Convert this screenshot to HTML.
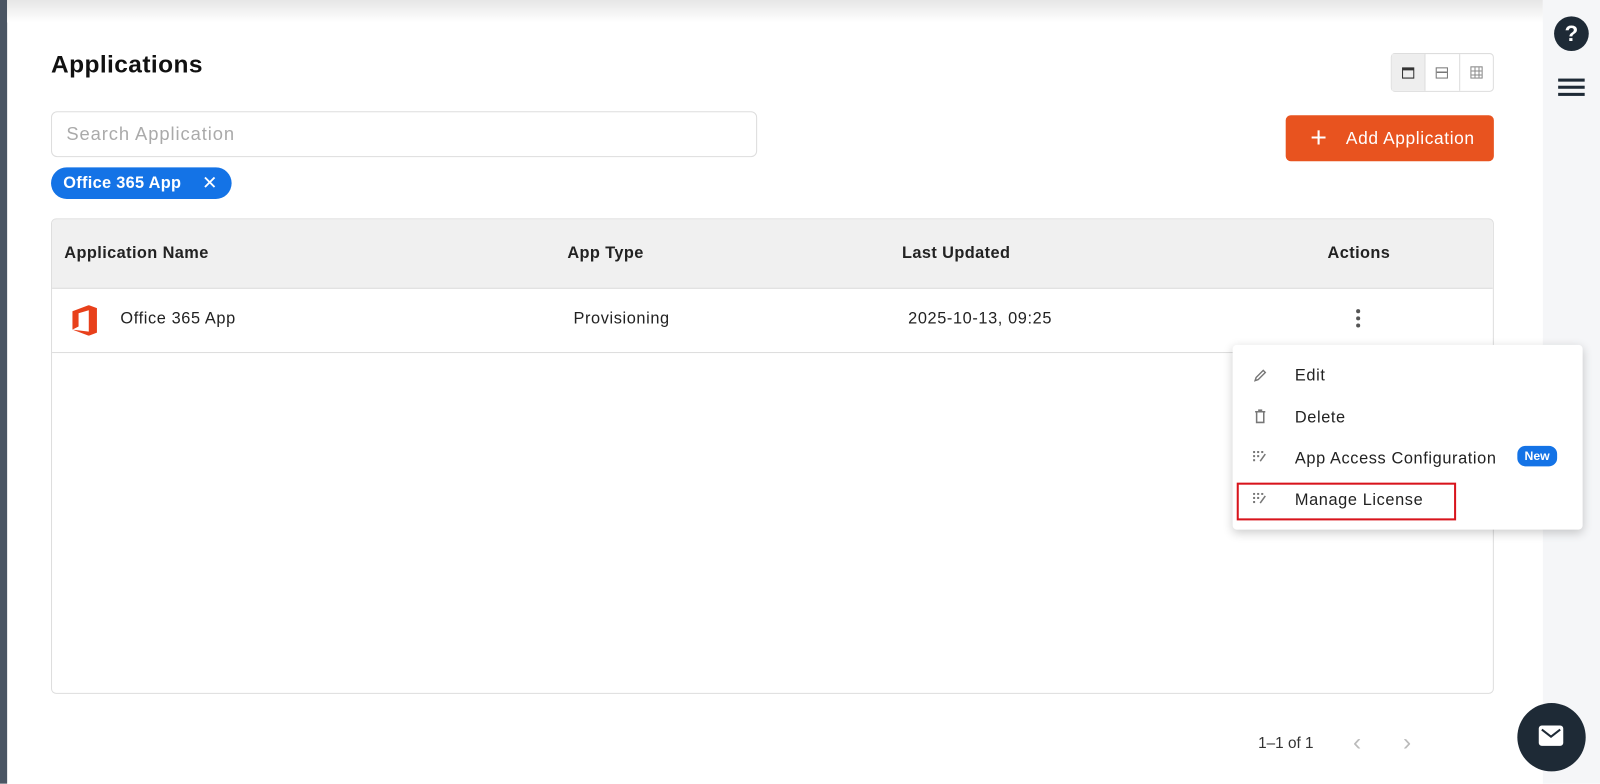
<!DOCTYPE html>
<html><head><meta charset="utf-8"><style>
*{box-sizing:border-box;margin:0;padding:0}
body{width:1600px;height:784px;overflow:hidden;background:#fff;font-family:"Liberation Sans",sans-serif;color:#222;position:relative}
#w{position:absolute;left:0;top:0;width:1568px;height:768px;transform:scale(1.0204);transform-origin:0 0}
.abs{position:absolute}
.t{letter-spacing:.6px}
</style></head><body><div id="w">
<div class="abs" style="left:0;top:0;width:7px;height:768px;background:#4a5563"></div>
<div class="abs" style="left:7px;top:0;width:1505px;height:22px;background:linear-gradient(#e6e6e6,#fff)"></div>
<div class="abs" style="left:1512px;top:0;width:56px;height:768px;background:#f5f6f8"></div>
<div class="abs" style="left:1523px;top:16px;width:34px;height:34px;border-radius:50%;background:#1e2a36;color:#fff;font-weight:bold;font-size:22px;text-align:center;line-height:34px">?</div>
<div class="abs" style="left:1527px;top:77px;width:26px;height:3px;background:#1e2a36;box-shadow:0 7px 0 #1e2a36,0 14px 0 #1e2a36"></div>
<div class="abs" style="left:50px;top:50px;font-size:24px;font-weight:bold;color:#111;letter-spacing:.4px">Applications</div>
<div class="abs" style="left:1363px;top:52px;width:101px;height:38px;border:1px solid #ddd;border-radius:4px;display:flex">
 <div style="width:34px;background:#eee;border-right:1px solid #ddd;display:flex;align-items:center;justify-content:center"><div style="width:12px;height:11px;border:1.5px solid #333;border-top-width:3px"></div></div>
 <div style="width:34px;border-right:1px solid #ddd;display:flex;align-items:center;justify-content:center"><div style="width:12px;height:11px;border:1.5px solid #777;background:linear-gradient(transparent 3px,#777 3px,#777 4.5px,transparent 4.5px)"></div></div>
 <div style="width:33px;display:flex;align-items:center;justify-content:center"><div style="width:12px;height:12px;border:1.5px solid #888;background:repeating-linear-gradient(90deg,transparent 0 3px,#888 3px 4px),repeating-linear-gradient(transparent 0 3px,#888 3px 4px)"></div></div>
</div>
<div class="abs t" style="left:50px;top:109px;width:692px;height:45px;border:1px solid #ddd;border-radius:6px;padding:0 14px;line-height:43px;font-size:18px;color:#aaa;letter-spacing:.9px">Search Application</div>
<div class="abs t" style="left:1260px;top:113px;width:204px;height:45px;background:#e8531f;border-radius:5px;color:#fff;font-size:17px;line-height:45px"><span style="position:absolute;left:24px;font-size:28px;font-weight:300;top:-1px">+</span><span style="position:absolute;left:59px">Add Application</span></div>
<div class="abs" style="left:50px;top:164px;width:177px;height:31px;background:#1473e6;border-radius:16px;color:#fff;font-weight:bold;font-size:16px;line-height:31px;padding-left:12px;letter-spacing:.3px">Office 365 App<span style="position:absolute;left:148px;font-weight:normal;font-size:18px">✕</span></div>
<div class="abs" style="left:50px;top:214px;width:1414px;height:466px;border:1px solid #ddd;border-radius:5px;overflow:hidden">
 <div style="height:68px;background:#f0f0f0;border-bottom:1px solid #ddd;position:relative;font-weight:bold;font-size:16px;color:#222;letter-spacing:.4px">
  <span class="abs" style="left:12px;top:25px">Application Name</span>
  <span class="abs" style="left:505px;top:25px">App Type</span>
  <span class="abs" style="left:833px;top:25px">Last Updated</span>
  <span class="abs" style="left:1250px;top:25px">Actions</span>
 </div>
 <div class="t" style="height:63px;border-bottom:1px solid #ddd;position:relative;font-size:16px;color:#222">
  <svg class="abs" style="left:19px;top:16px" width="26" height="30" viewBox="0 0 26 30"><path d="M1 6 L17 0 L25 3 L25 27 L17 30 L1 24 L17 26 L17 5 L7 8 L7 21 L1 24 Z" fill="#e8401b"/></svg>
  <span class="abs" style="left:67px;top:21px">Office 365 App</span>
  <span class="abs" style="left:511px;top:21px">Provisioning</span>
  <span class="abs" style="left:839px;top:21px">2025-10-13, 09:25</span>
  <div class="abs" style="left:1278px;top:20px;width:4px;height:4px;border-radius:50%;background:#555;box-shadow:0 7px 0 #555,0 14px 0 #555"></div>
 </div>
</div>
<div class="abs t" style="left:1208px;top:338px;width:343px;height:181px;background:#fff;border-radius:4px;box-shadow:0 3px 10px rgba(0,0,0,.2);font-size:16px;color:#222">
 <svg class="abs" style="left:20px;top:23px" width="14" height="14"><path d="M2 12 L3 9 L10 2 L12 4 L5 11 Z" fill="none" stroke="#777" stroke-width="1.4"/></svg>
 <span class="abs" style="left:61px;top:22px">Edit</span>
 <svg class="abs" style="left:21px;top:63px" width="12" height="14"><path d="M1 2.5 H11 M4 1 H8 M2.5 3 V13 H9.5 V3" fill="none" stroke="#777" stroke-width="1.5"/></svg>
 <span class="abs" style="left:61px;top:63px">Delete</span>
 <svg class="abs" style="left:20px;top:104px" width="14" height="12" fill="#777"><rect x="0" y="0" width="2" height="2"/><rect x="4" y="0" width="2" height="2"/><rect x="8" y="0" width="2" height="2"/><rect x="0" y="4" width="2" height="2"/><rect x="4" y="4" width="2" height="2"/><rect x="0" y="8" width="2" height="2"/><path d="M7 10 L12 3" stroke="#777" stroke-width="1.5"/></svg>
 <span class="abs" style="left:61px;top:103px">App Access Configuration</span>
 <span class="abs" style="left:279px;top:99px;background:#1473e6;color:#fff;font-weight:bold;font-size:12px;padding:3px 7px;border-radius:8px;letter-spacing:0">New</span>
 <svg class="abs" style="left:20px;top:145px" width="14" height="12" fill="#777"><rect x="0" y="0" width="2" height="2"/><rect x="4" y="0" width="2" height="2"/><rect x="8" y="0" width="2" height="2"/><rect x="0" y="4" width="2" height="2"/><rect x="4" y="4" width="2" height="2"/><rect x="0" y="8" width="2" height="2"/><path d="M7 10 L12 3" stroke="#777" stroke-width="1.5"/></svg>
 <span class="abs" style="left:61px;top:144px">Manage License</span>
 <div class="abs" style="left:4px;top:135px;width:215px;height:37px;border:2px solid #d8141c"></div>
</div>
<div class="abs" style="left:1233px;top:720px;font-size:15px;color:#333">1–1 of 1</div>
<div class="abs" style="left:1326px;top:714px;font-size:24px;color:#bbb">‹</div>
<div class="abs" style="left:1375px;top:714px;font-size:24px;color:#bbb">›</div>
<div class="abs" style="left:1487px;top:689px;width:67px;height:67px;border-radius:50%;background:#1e2a36"></div>
<svg class="abs" style="left:1507px;top:710px" width="26" height="22"><rect x="1" y="1" width="24" height="20" rx="3" fill="#fff"/><path d="M4 5 L13 12 L22 5" fill="none" stroke="#1e2a36" stroke-width="2"/></svg>
</div></body></html>
